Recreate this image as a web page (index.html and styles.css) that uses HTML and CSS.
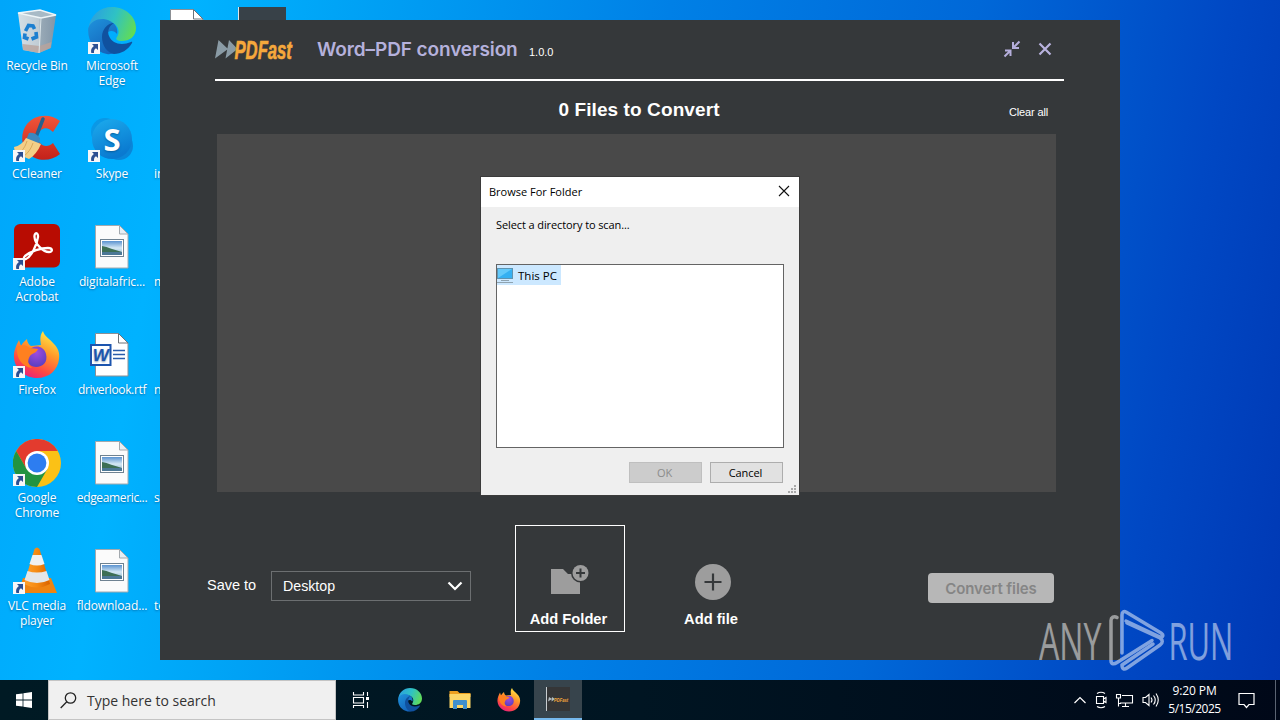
FILE: index.html
```html
<!DOCTYPE html>
<html lang="en">
  <head>
    <meta charset="UTF-8" />
    <meta name="viewport" content="width=device-width, initial-scale=1.0" />
    <title>PDFast</title>
    <link rel="stylesheet" href="styles.css">
  </head>
  <body>
    <!-- shared icon symbols -->
    <svg class="defs" width="0" height="0">
      <defs>
        <linearGradient id="edge-a" x1="0" y1="0.3" x2="1" y2="0.6">
          <stop offset="0" stop-color="#2b9fe0" />
          <stop offset="0.5" stop-color="#2fc2c4" />
          <stop offset="1" stop-color="#62dc55" />
        </linearGradient>
        <linearGradient id="edge-b" x1="0" y1="0" x2="0.6" y2="1">
          <stop offset="0" stop-color="#1f93dc" />
          <stop offset="1" stop-color="#1464bb" />
        </linearGradient>
        <linearGradient id="fox-a" x1="0.8" y1="0" x2="0.3" y2="1">
          <stop offset="0" stop-color="#fff14a" />
          <stop offset="0.4" stop-color="#ff9a2a" />
          <stop offset="0.75" stop-color="#ff4a42" />
          <stop offset="1" stop-color="#e8207c" />
        </linearGradient>
        <radialGradient id="fox-b" cx="0.5" cy="0.3" r="0.7">
          <stop offset="0" stop-color="#a04be0" />
          <stop offset="1" stop-color="#5a3fc0" />
        </radialGradient>
        <linearGradient id="skype-a" x1="0" y1="0" x2="0.4" y2="1">
          <stop offset="0" stop-color="#1cacee" />
          <stop offset="1" stop-color="#0a7ad0" />
        </linearGradient>
        <linearGradient id="cc-a" x1="0" y1="0" x2="0" y2="1">
          <stop offset="0" stop-color="#f0563a" />
          <stop offset="1" stop-color="#c4211a" />
        </linearGradient>
        <linearGradient id="photo-a" x1="0" y1="0" x2="0" y2="1">
          <stop offset="0" stop-color="#5b93d0" />
          <stop offset="0.5" stop-color="#d5e8f4" />
          <stop offset="1" stop-color="#88b4d0" />
        </linearGradient>
        <linearGradient id="cone-a" x1="0" y1="0" x2="1" y2="0">
          <stop offset="0" stop-color="#ffa22e" />
          <stop offset="0.5" stop-color="#f58a12" />
          <stop offset="1" stop-color="#d96200" />
        </linearGradient>
        <linearGradient id="bin-a" x1="0" y1="0" x2="1" y2="0">
          <stop offset="0" stop-color="#d4dfe6" />
          <stop offset="0.55" stop-color="#c0ccd4" />
          <stop offset="0.6" stop-color="#98a9b6" />
          <stop offset="1" stop-color="#8296a8" />
        </linearGradient>
      </defs>

      <symbol id="i-arrow" viewBox="0 0 12 12">
        <rect width="12" height="12" fill="#f6f6f8" />
        <path d="M4 2h6v6L8 6.200C6.400 7.200 5.800 8.600 6 11H3.300C2.600 8.200 3.400 6 5.900 4.100z" fill="#2c4f92" />
      </symbol>

      <symbol id="i-edge" viewBox="0 0 48 48">
        <path d="M0.500 22C2 8 12 0 24 0c14 0 24 10 24 21 0 9-7 13-14 13-5 0-7-2-5-4 3-4 2-11-4-14-9-4-21-1-24.500 6z" fill="url(#edge-a)" />
        <path d="M0.300 21C4 12 14 10 22 14c6 3 8 8 7 13-2-3-6-4-9-2-6 5-3 17 7 21-3 1-6 1.500-8 1C7 45-1 34 0.300 21z" fill="url(#edge-b)" />
        <path d="M14 30c0-8 6-14 12-14-5 3-7 8-5 13 3 8 13 10 22 6 1-.5 1.500 0 1 1-4 7-11 11-18 11-7-1-12-9-12-17z" fill="#10519f" />
      </symbol>

      <symbol id="i-bin" viewBox="0 0 48 48">
        <path d="M5 6l22-3 16 5-5 33-12 5-16-3z" fill="url(#bin-a)" />
        <path d="M9.500 37l17 2 12-4-1 6-11.500 5-16-3z" fill="#b9a49c" opacity=".8" />
        <path d="M5 6l22-3 16 5-15 3z" fill="#a8bac6" stroke="#eef5f8" stroke-width="1.500" />
        <path d="M28 11l-2 35" stroke="#dce6ea" fill="none" />
        <g fill="none" stroke="#1c7fd0" stroke-width="3.600">
          <path d="M12.500 24l3-5.500 4.500 0.500 1.500 3" />
          <path d="M23 25l0.500 5-5 2" />
          <path d="M15.500 32l-4-1.500 0.500-4" />
        </g>
      </symbol>

      <symbol id="i-ccleaner" viewBox="0 0 48 48">
        <path d="M47 6C37-2 22-1 14 9 6 19 8 36 20 42c9 5 20 3 27-3l-7-11c-4 4-10 4-13 0-4-4-3-10 1-13 4-3 8-2 12 2z" fill="url(#cc-a)" />
        <path d="M30 4l-7 18" stroke="#24618f" stroke-width="3.500" stroke-linecap="round" />
        <path d="M16 18q6-1 11 5l-1 7-13-5z" fill="#3b87be" />
        <path d="M13 23l15 6c-3 7-7 12-12 15L2 38l-1-6c5-1 9-4 12-9z" fill="#f3cf87" />
        <path d="M14 26c-2 6-4 9-8 12M20 28c-2 6-5 10-9 13" stroke="#d9a95b" fill="none" />
      </symbol>

      <symbol id="i-skype" viewBox="0 0 48 48">
        <circle cx="17" cy="17" r="14" fill="#0a98e6" />
        <circle cx="31" cy="31" r="14" fill="#0a86d8" />
        <circle cx="24" cy="24" r="20" fill="url(#skype-a)" />
        <text x="24" y="35.500" text-anchor="middle" class="skype-letter">S</text>
      </symbol>

      <symbol id="i-acrobat" viewBox="0 0 48 48">
        <rect x="1" y="1" width="46" height="43.500" rx="6" fill="#b80c02" />
        <path d="M12 33c-2 2-1 4 1 3 5-2 11-14 12-22 .5-5-4-5-3.500 0C22 21 30 29 36 29c4 0 4-4-1-4-7 0-17 3-23 8z" fill="none" stroke="#fff" stroke-width="2.300" stroke-linejoin="round" />
      </symbol>

      <symbol id="i-firefox" viewBox="0 0 48 48">
        <path d="M30 0c1 5 7 8 11 13 4 4 6 9 5 15-1 11-10 19-22 19S2 38 1 27c-.5-7 2-12 5-18l2 6c2-4 5-6 6-7 0 3 2 6 4 7l10-1c-1-6-1-10 2-14z" fill="url(#fox-a)" />
        <path d="M15 20c5-7 16-6 18 3 2 8-3 13-10 13-8 0-12-9-8-16z" fill="url(#fox-b)" />
        <path d="M4 16c5-3 10-2 13 1l8 1c-1 4-6 4-8 7-3 5-2 8 2 12C9 36 3 27 4 16z" fill="#ff8020" />
      </symbol>

      <symbol id="i-chrome" viewBox="0 0 48 48">
        <circle cx="24" cy="24" r="24" fill="#fbc116" />
        <path d="M3.200 12A24 24 0 0 1 44.800 12H24L13.600 30z" fill="#e33b2e" />
        <path d="M3.200 12A24 24 0 0 0 24 48L34.400 30 24 36 13.600 30z" fill="#229342" />
        <circle cx="24" cy="24" r="12" fill="#fff" />
        <circle cx="24" cy="24" r="9.400" fill="#2d7df0" />
      </symbol>

      <symbol id="i-vlc" viewBox="0 0 48 48">
        <path d="M10 31h28l6 15H5z" fill="#ef8412" />
        <path d="M21.500 2q2.500-3 5 0L37 37q-13 7-26 0z" fill="url(#cone-a)" />
        <path d="M19.500 8h9l3 9q-7.500 3-15 0z" fill="#f0f1f2" />
        <path d="M14.500 24q9.500 3 19 0l3 9q-12.500 6-25 0z" fill="#e4e6e8" />
      </symbol>

      <symbol id="i-page" viewBox="0 0 48 48">
        <path d="M7.500 2.500h24l8.500 8.500v34H7.500z" fill="#fbfbfb" stroke="#a3a9ae" />
        <path d="M31.500 2.500V11H40z" fill="#e6eef4" stroke="#a3a9ae" />
      </symbol>

      <symbol id="i-photo" viewBox="0 0 48 48">
        <use href="#i-page" />
        <rect x="12.500" y="16.500" width="23" height="17" fill="#fff" stroke="#6f8291" />
        <rect x="14" y="18" width="20" height="14" fill="url(#photo-a)" />
        <path d="M14 23c6 1 12 4 20 6H14z" fill="#3d6f55" />
        <path d="M14 29h20v3H14z" fill="#4c7896" />
      </symbol>

      <symbol id="i-word" viewBox="0 0 48 48">
        <path d="M7.500 2.500h23l9.500 9.500v33H7.500z" fill="#fff" stroke="#8b8f94" />
        <path d="M30.500 2.500V12H40z" fill="#fff" stroke="#6d7278" />
        <path d="M25 19.500h12M25 23.500h12M25 27.500h12" stroke="#2a5caa" stroke-width="1.300" />
        <rect x="3" y="14" width="19.500" height="20" fill="#fff" stroke="#1d55ae" stroke-width="2" />
        <text x="12.800" y="30" text-anchor="middle" class="word-letter">W</text>
      </symbol>
    </svg>

    <main class="desktop">
      <div class="icons">
        <div class="icon">
          <svg><use href="#i-bin" /></svg>
          <span>Recycle Bin</span>
        </div>
        <div class="icon">
          <svg><use href="#i-ccleaner" /><use href="#i-arrow" y="35" width="12" height="12" /></svg>
          <span>CCleaner</span>
        </div>
        <div class="icon">
          <svg><use href="#i-acrobat" /><use href="#i-arrow" y="35" width="12" height="12" /></svg>
          <span>Adobe<br />Acrobat</span>
        </div>
        <div class="icon">
          <svg><use href="#i-firefox" /><use href="#i-arrow" y="35" width="12" height="12" /></svg>
          <span>Firefox</span>
        </div>
        <div class="icon">
          <svg><use href="#i-chrome" /><use href="#i-arrow" y="35" width="12" height="12" /></svg>
          <span>Google<br />Chrome</span>
        </div>
        <div class="icon">
          <svg><use href="#i-vlc" /><use href="#i-arrow" y="35" width="12" height="12" /></svg>
          <span>VLC media<br />player</span>
        </div>

        <div class="icon">
          <svg><use href="#i-edge" /><use href="#i-arrow" y="35" width="12" height="12" /></svg>
          <span>Microsoft<br />Edge</span>
        </div>
        <div class="icon">
          <svg><use href="#i-skype" /><use href="#i-arrow" y="35" width="12" height="12" /></svg>
          <span>Skype</span>
        </div>
        <div class="icon">
          <svg><use href="#i-photo" /></svg>
          <span>digitalafric...</span>
        </div>
        <div class="icon">
          <svg><use href="#i-word" /></svg>
          <span class="tight">driverlook.rtf</span>
        </div>
        <div class="icon">
          <svg><use href="#i-photo" /></svg>
          <span class="tight">edgeameric...</span>
        </div>
        <div class="icon">
          <svg><use href="#i-photo" /></svg>
          <span>fldownload...</span>
        </div>

        <div class="icon cut">
          <svg viewBox="0 0 48 48">
            <path d="M7.500 2.500h23l9.500 9.500v33H7.500z" fill="#fff" stroke="#8b8f94" />
            <path d="M30.500 2.500V12H40z" fill="#fff" stroke="#6d7278" />
          </svg>
        </div>
        <div class="icon cut"><svg></svg><span>in</span></div>
        <div class="icon cut"><svg></svg><span>m</span></div>
        <div class="icon cut"><svg></svg><span>n</span></div>
        <div class="icon cut"><svg></svg><span>su</span></div>
        <div class="icon cut"><svg></svg><span>te</span></div>

        <div class="icon">
          <svg viewBox="0 0 48 48"><path d="M0 0h48v48H0z" fill="#384148" /><path d="M0.500 0v48" stroke="#dfe6ea" /></svg>
        </div>
      </div>

      <section class="app">
        <header class="app-header">
          <svg class="logo" width="80" height="24" viewBox="0 0 80 24">
            <path d="M3.500 2L13 11 0 20.500zM14 2L22.500 11 10.500 20.500z" fill="#8a9ba5" />
            <text transform="translate(19.500 20.500) scale(.66 1)" class="logo-text" textLength="87" lengthAdjust="spacingAndGlyphs">PDFast</text>
          </svg>
          <h1>Word–PDF conversion</h1>
          <span class="version">1.0.0</span>
          <div class="window-buttons">
            <svg width="18" height="18" viewBox="0 0 18 18" fill="none" stroke="#b5aedb" stroke-width="2">
              <path d="M16.500 1.500L11 7M10 2v6h6M1.500 16.500L7 11M2 10.500h5.500V16" />
            </svg>
            <svg width="14" height="14" viewBox="0 0 14 14" fill="none" stroke="#b9b2de" stroke-width="2.200">
              <path d="M1.500 1.500l11 11M12.500 1.500l-11 11" />
            </svg>
          </div>
        </header>

        <div class="list-header">
          <h2>0 Files to Convert</h2>
          <a class="clear">Clear all</a>
        </div>
        <div class="file-list"></div>

        <footer class="app-footer">
          <span class="save-label">Save to</span>
          <div class="select">
            <span>Desktop</span>
            <svg width="16" height="10" viewBox="0 0 16 10" fill="none" stroke="#fff" stroke-width="2.200">
              <path d="M1.500 1.500L8 8l6.500-6.500" />
            </svg>
          </div>
          <div class="tile selected">
            <svg width="40" height="32" viewBox="0 0 40 32">
              <path d="M1 5h12l5 5h12v20H1z" fill="#9d9d9d" />
              <circle cx="30.500" cy="9" r="9.500" fill="#35383a" />
              <circle cx="30.500" cy="9" r="8" fill="#9d9d9d" />
              <path d="M30.500 4.500v9M26 9h9" stroke="#35383a" stroke-width="2" />
            </svg>
            <span>Add Folder</span>
          </div>
          <div class="tile">
            <svg width="36" height="36" viewBox="0 0 36 36">
              <circle cx="18" cy="18" r="18" fill="#9d9d9d" />
              <path d="M18 9.500v17M9.500 18h17" stroke="#35383a" stroke-width="2.200" />
            </svg>
            <span>Add file</span>
          </div>
          <button class="convert" disabled>Convert files</button>
        </footer>
      </section>

      <section class="dialog">
        <div class="dialog-title">
          <span>Browse For Folder</span>
          <svg width="12" height="12" viewBox="0 0 12 12" fill="none" stroke="#111" stroke-width="1.100">
            <path d="M1 1l10 10M11 1L1 11" />
          </svg>
        </div>
        <div class="dialog-body">
          <p>Select a directory to scan...</p>
          <div class="tree">
            <div class="tree-item">
              <svg width="17" height="17" viewBox="0 0 17 17">
                <rect x="0.500" y="1.500" width="15" height="10" fill="#35b0f2" stroke="#5f93b0" />
                <path d="M1 2h14L1 11z" fill="#63c9fa" />
                <path d="M4 13.500h8M0 15.500h16" stroke="#8fa3b0" />
              </svg>
              <span>This PC</span>
            </div>
          </div>
          <div class="dialog-actions">
            <button disabled>OK</button>
            <button>Cancel</button>
          </div>
          <svg class="grip" width="9" height="9" viewBox="0 0 9 9" fill="#a8a8a8">
            <path d="M6 0h2v2H6zM3 3h2v2H3zM6 3h2v2H6zM0 6h2v2H0zM3 6h2v2H3zM6 6h2v2H6z" />
          </svg>
        </div>
      </section>

      <!-- any.run watermark -->
      <svg class="watermark" width="194" height="64" viewBox="0 0 194 64">
        <text transform="translate(1 50.500) scale(.6 1)" class="mark-text" textLength="104" lengthAdjust="spacingAndGlyphs">ANY</text>
        <text transform="translate(130.500 50.500) scale(.6 1)" class="mark-text" textLength="108" lengthAdjust="spacingAndGlyphs">RUN</text>
        <g fill="none" stroke="#fff" stroke-width="3.500" stroke-linejoin="round" stroke-linecap="round">
          <path d="M79 8.500c-3-2-6 0-6 3v40c0 4 3 4 6 2l35-22" />
          <path d="M84 44V6c0-3 2-4 4-3l35 21c3 2 2 5-1 4L88 12" />
          <path d="M84 56c0 4 2 5 5 3l33-23c3-2 3-5 0-7L89 14M84 56l31-21" />
        </g>
      </svg>
    </main>

    <nav class="taskbar">
      <div class="start">
        <svg width="16" height="16" viewBox="0 0 16 16" fill="#fff">
          <path d="M0 2.300L6.600 1.400v6.200H0zM7.400 1.300L16 0v7.600H7.400zM0 8.400h6.600v6.200L0 13.700zM7.400 8.400H16V16l-8.600-1.300z" />
        </svg>
      </div>
      <div class="search">
        <svg width="17" height="17" viewBox="0 0 17 17" fill="none" stroke="#222" stroke-width="1.300">
          <circle cx="10.500" cy="6" r="5.200" />
          <path d="M6.800 9.800L0.700 16" />
        </svg>
        <span>Type here to search</span>
      </div>
      <div class="task">
        <svg width="16" height="16" viewBox="0 0 16 16" fill="none" stroke="#fff" stroke-width="1.100">
          <path d="M0.500 0v3h10V0M0.500 16v-2.500h10V16M0.500 5.500h10v5.500H0.500zM14.500 0v4M14.500 10v6" />
          <path d="M13 5h3v3h-3z" fill="#fff" stroke="none" />
        </svg>
      </div>
      <div class="task"><svg width="24" height="24"><use href="#i-edge" /></svg></div>
      <div class="task">
        <svg width="22" height="20" viewBox="0 0 22 20">
          <path d="M0.500 1h8l2 2h11v4h-21z" fill="#eda01f" />
          <path d="M0.500 4h21v14h-21z" fill="#fcd667" />
          <path d="M4 19v-8q0-1 1-1h12q1 0 1 1v8h-4v-4H8v4z" fill="#3f8fcd" />
        </svg>
      </div>
      <div class="task"><svg width="24" height="24"><use href="#i-firefox" /></svg></div>
      <div class="task active">
        <svg width="24" height="24" viewBox="0 0 24 24">
          <rect width="24" height="24" fill="#353637" />
          <path d="M0.500 0v24" stroke="#c8cdd0" />
          <path d="M3 10l3 2-4 2.500zM6 10l3 2-3.500 2.500z" fill="#b4bcc0" />
          <text x="8" y="14.500" class="mini-logo" textLength="14" lengthAdjust="spacingAndGlyphs">PDFast</text>
        </svg>
      </div>
      <div class="tray">
        <svg width="12" height="8" viewBox="0 0 12 8" fill="none" stroke="#fff" stroke-width="1.200">
          <path d="M0.500 7L6 1.500 11.500 7" />
        </svg>
        <svg width="12" height="18" viewBox="0 0 12 18" fill="none" stroke="#fff" stroke-width="1.100">
          <path d="M1.500 5.500h7v7h-7zM8.500 8l2.500-1.500v5l-2.500-1.500M2 2.500Q6 0 10 2.500M2 15.500Q6 18 10 15.500" />
        </svg>
        <svg width="17" height="16" viewBox="0 0 17 16" fill="none" stroke="#fff" stroke-width="1.100">
          <path d="M6 3.500h10.500v7.500H4M0.500 2.500h4v3.500h-4zM2.500 6v8.500M2.500 11.500H5M9.500 11v3M6 14.500h7" />
        </svg>
        <svg width="17" height="16" viewBox="0 0 17 16" fill="none" stroke="#fff" stroke-width="1.100">
          <path d="M1 5.500h2.500L7 2.500v11L3.500 10.500H1zM9 5.500q2 2.500 0 5M11.500 3.500q3.500 4.500 0 9M14 1.500q4.500 6.500 0 13" />
        </svg>
      </div>
      <div class="clock">
        <span>9:20 PM</span>
        <span class="date">5/15/2025</span>
      </div>
      <svg class="notify" width="17" height="17" viewBox="0 0 17 17" fill="none" stroke="#fff" stroke-width="1.200">
        <path d="M1 1.500h15v11h-5L8.500 15.500 6 12.500H1z" />
      </svg>
      <div class="show-desktop"></div>
    </nav>
  </body>
</html>
```

FILE: styles.css
```css
* {
  box-sizing: border-box;
}

body {
  margin: 0;
  width: 1280px;
  height: 720px;
  overflow: hidden;
  font-family: "Open Sans", "Noto Sans", sans-serif;
  display: flex;
  flex-direction: column;
}

svg {
  display: block;
  flex-shrink: 0;
  overflow: visible;
}

.defs {
  position: absolute;
}

h1,
h2,
p {
  margin: 0;
}

/* desktop */
.desktop {
  position: relative;
  height: 680px;
  background: linear-gradient(100deg, #00a6fa 0%, #00b2ff 14%, #00a4f6 24%, #0080e6 48%, #0068d8 70%, #0048c4 88%, #0038b4 100%);
}

.icons {
  display: grid;
  grid-template-rows: repeat(6, 108px);
  grid-auto-columns: 75px;
  grid-auto-flow: column;
  justify-content: start;
  padding-top: 7px;
}

.icon {
  display: flex;
  flex-direction: column;
  align-items: center;
  gap: 3px;
  padding-right: 1px;
  color: #fff;
  font-size: 12px;
  line-height: 15px;
  letter-spacing: -0.1px;
  text-align: center;
  white-space: nowrap;
  text-shadow: 0 1px 2px rgba(0, 50, 100, 0.5);
}

.icon svg {
  width: 48px;
  height: 48px;
}

.icon .tight {
  letter-spacing: -0.35px;
}

.icon.cut span {
  align-self: flex-start;
  margin-left: 4px;
}

.skype-letter {
  font: bold 31px "Open Sans", sans-serif;
  fill: #fff;
}

.word-letter {
  font: italic bold 17px "Liberation Sans", sans-serif;
  fill: #1d55ae;
}

/* application window */
.app {
  position: absolute;
  left: 160px;
  top: 20px;
  width: 960px;
  height: 640px;
  background: #35383a;
  color: #fff;
  font-family: "Liberation Sans", Arial, sans-serif;
}

.app-header {
  display: flex;
  align-items: center;
  height: 61px;
  margin: 0 56px 0 55px;
  border-bottom: 2px solid #fff;
}

.logo-text {
  font: italic bold 25px "Liberation Sans", Arial, sans-serif;
  fill: #f5a83c;
  stroke: #f5a83c;
  stroke-width: 0.6px;
}

.app-header h1 {
  width: 202px;
  margin: 0 0 1px 22px;
  font: 600 19px Inter, sans-serif;
  letter-spacing: -0.1px;
  white-space: nowrap;
  color: #b5b1dc;
}

.version {
  margin: 5px 0 0 10px;
  font-size: 11px;
}

.window-buttons {
  display: flex;
  align-items: center;
  gap: 17px;
  margin-left: auto;
  padding: 0 12px 2px 0;
}

.list-header {
  display: grid;
  grid-template-columns: 1fr auto 1fr;
  align-items: center;
  height: 53px;
  padding: 3px 72px 0 70px;
}

.list-header h2 {
  grid-column: 2;
  font-size: 19px;
  letter-spacing: 0.1px;
  padding-top: 1px;
}

.clear {
  justify-self: end;
  padding-top: 5px;
  font-size: 11px;
  letter-spacing: -0.15px;
}

.file-list {
  height: 358px;
  margin: 0 64px 0 57px;
  background: #494949;
}

.app-footer {
  display: flex;
  align-items: flex-start;
  padding: 33px 66px 0 47px;
}

.save-label {
  width: 64px;
  margin-top: 52px;
  font-size: 14.5px;
}

.select {
  display: flex;
  align-items: center;
  justify-content: space-between;
  width: 200px;
  height: 30px;
  margin: 46px 44px 0 0;
  padding: 0 7px 0 11px;
  border: 1px solid #6c6f71;
  font-size: 14.2px;
}

.tile {
  display: flex;
  flex-direction: column;
  align-items: center;
  justify-content: flex-end;
  width: 110px;
  height: 107px;
  padding-bottom: 4px;
  border: 1px solid transparent;
  font-size: 14.7px;
  font-weight: bold;
}

.tile svg {
  margin: 0 0 11px 4px;
}

.tile.selected {
  border-color: #fff;
  margin-right: 31px;
  padding-right: 3px;
}

.tile.selected svg {
  margin: 0 0 15px 3px;
}

.convert {
  width: 126px;
  height: 30px;
  margin: 48px 0 0 auto;
  padding: 0;
  border: none;
  border-radius: 4px;
  background: #b7b7b7;
  color: #858585;
  font: 600 15px Inter, sans-serif;
  letter-spacing: -0.1px;
}

/* folder picker */
.dialog {
  position: absolute;
  left: 481px;
  top: 177px;
  width: 318px;
  height: 318px;
  background: #efefef;
  color: #000;
  font-size: 11px;
  outline: 1px solid #3b3b3b;
}

.dialog-title {
  display: flex;
  align-items: center;
  justify-content: space-between;
  height: 30px;
  padding: 0 9px 2px 8px;
  background: #fff;
}

.dialog-body {
  padding: 10px 15px 0 15px;
}

.dialog-body p {
  height: 47px;
  line-height: 16px;
  letter-spacing: -0.1px;
}

.tree {
  width: 288px;
  height: 184px;
  border: 1px solid #646464;
  background: #fff;
}

.tree-item {
  display: flex;
  align-items: center;
  gap: 4px;
  width: 64px;
  height: 20px;
  background: #cce8ff;
  font-size: 11.5px;
  white-space: nowrap;
}

.dialog-actions {
  display: flex;
  justify-content: flex-end;
  gap: 8px;
  margin-top: 14px;
  padding-right: 1px;
}

.dialog-actions button {
  width: 73px;
  height: 21px;
  padding: 0 2px 0 0;
  border: 1px solid #adadad;
  background: #e1e1e1;
  color: #000;
  font: 11px "Open Sans", sans-serif;
  letter-spacing: -0.1px;
}

.dialog-actions button:disabled {
  background: #cccccc;
  border-color: #bfbfbf;
  color: #8b8b8b;
}

.grip {
  margin: 2px -13px 0 auto;
}

.watermark {
  position: absolute;
  left: 1038px;
  top: 609px;
  opacity: 0.5;
}

.mark-text {
  font: 400 52px "Open Sans", sans-serif;
  fill: #fff;
}

/* taskbar */
.taskbar {
  display: flex;
  align-items: center;
  height: 40px;
  background: linear-gradient(90deg, #001a24, #001522 50%, #000818);
  color: #fff;
}

.start,
.task {
  display: flex;
  align-items: center;
  justify-content: center;
  width: 48px;
  height: 40px;
}

.task {
  width: 49.5px;
}

.search {
  display: flex;
  align-items: center;
  gap: 10px;
  width: 288px;
  height: 40px;
  padding-left: 11px;
  border: 1px solid #c4c4c4;
  background: #f0f0f0;
  color: #333;
  font-size: 14px;
}

.task.active {
  width: 48px;
  background: #37444c;
  border-bottom: 2px solid #76b9ed;
}

.mini-logo {
  font: italic bold 6px "Liberation Sans", sans-serif;
  fill: #f5a83c;
}

.tray {
  display: flex;
  align-items: center;
  gap: 9px;
  margin-left: auto;
}

.clock {
  display: flex;
  flex-direction: column;
  align-items: center;
  width: 71px;
  font-size: 12px;
  line-height: 18px;
  letter-spacing: -0.1px;
  padding-bottom: 1px;
}

.clock .date {
  letter-spacing: -0.5px;
}

.notify {
  margin: 0 20px 0 8px;
}

.show-desktop {
  width: 5px;
  height: 40px;
  border-left: 1px solid #5b6472;
}
```
